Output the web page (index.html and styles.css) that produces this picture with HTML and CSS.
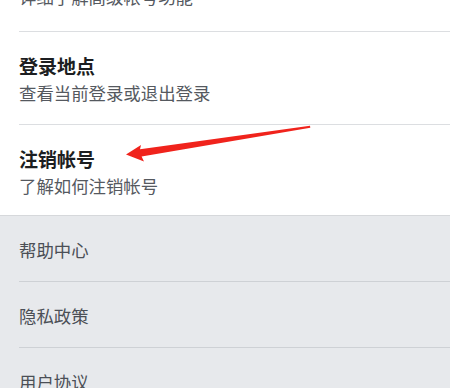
FILE: index.html
```html
<!DOCTYPE html>
<html lang="zh-CN">
<head>
<meta charset="utf-8">
<title>帐号设置</title>
<link rel="stylesheet" href="styles.css">
</head>
<body>
<div class="page">
  <section class="main">
    <div class="item item-first">
      <div class="title">高级帐号</div>
      <div class="sub">详细了解高级帐号功能</div>
    </div>
    <div class="item">
      <div class="title">登录地点</div>
      <div class="sub">查看当前登录或退出登录</div>
    </div>
    <div class="item item-last">
      <div class="title">注销帐号</div>
      <div class="sub">了解如何注销帐号</div>
    </div>
  </section>
  <section class="links">
    <div class="link">帮助中心</div>
    <div class="link">隐私政策</div>
    <div class="link">用户协议</div>
  </section>
  <svg class="arrow" width="450" height="388" viewBox="0 0 450 388" aria-hidden="true">
    <polygon points="126,154.5 141,145 140,149.2 310,125.8 310.3,127.8 141.6,156.6 144,161.5" fill="#f0231c"/>
  </svg>
</div>
</body>
</html>
```
FILE: styles.css
```css
html, body {
  margin: 0;
  padding: 0;
}
body {
  width: 450px;
  height: 388px;
  overflow: hidden;
  background: #e7e9ec;
  font-family: "Noto Sans CJK SC", "Noto Sans", sans-serif;
}
.page {
  position: relative;
  width: 450px;
  height: 388px;
  overflow: hidden;
}
.main {
  background: #ffffff;
  margin-top: -64px;
}
.item {
  margin-left: 19px;
  padding: 21px 0 19px;
  border-bottom: 1px solid #dcdee1;
}
.item-first {
  padding-bottom: 22px;
}
.item-last {
  border-bottom: none;
  padding-bottom: 17px;
}
.title {
  font-size: 19px;
  line-height: 26px;
  font-weight: 700;
  color: #1c1e21;
}
.sub {
  margin-top: 2px;
  font-size: 17.4px;
  line-height: 24px;
  color: #55595f;
}
.links {
  background: #e7e9ec;
  border-top: 1px solid #d6d8db;
}
.link {
  margin-left: 19px;
  padding: 22px 0 19px;
  font-size: 17.4px;
  line-height: 24px;
  color: #4b4f56;
  border-bottom: 1px solid #ced1d5;
}
.arrow {
  position: absolute;
  left: 0;
  top: 0;
  pointer-events: none;
}
```
